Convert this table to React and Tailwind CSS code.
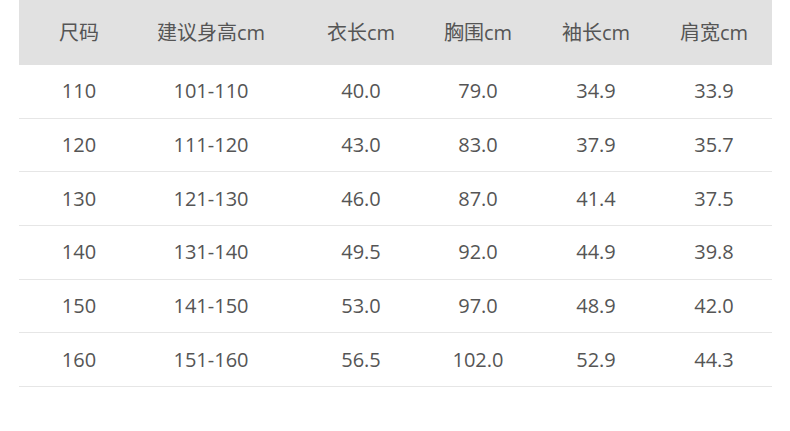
const headers = ['尺码', '建议身高cm', '衣长cm', '胸围cm', '袖长cm', '肩宽cm']

const rows = [
  ['110', '101-110', '40.0', '79.0', '34.9', '33.9'],
  ['120', '111-120', '43.0', '83.0', '37.9', '35.7'],
  ['130', '121-130', '46.0', '87.0', '41.4', '37.5'],
  ['140', '131-140', '49.5', '92.0', '44.9', '39.8'],
  ['150', '141-150', '53.0', '97.0', '48.9', '42.0'],
  ['160', '151-160', '56.5', '102.0', '52.9', '44.3'],
]

// column widths picked so each text centre lands where the picture has it
const cols = 'grid grid-cols-[120px_144px_156px_78px_158px_78px_1fr]'

export default function App() {
  return (
    <div
      className="w-[790px] h-[431px] bg-white pl-[19px] pr-[18px] text-[20px] text-[#555]"
      style={{ fontFamily: '"Open Sans", "Noto Sans CJK SC", sans-serif' }}
    >
      <div className={`${cols} h-[65px] items-center bg-[#e1e1e1] text-[#555]`}>
        {headers.map(h => (
          <div key={h} className="text-center whitespace-nowrap">{h}</div>
        ))}
      </div>
      {rows.map(row => (
        <div key={row[0]} className={`${cols} h-[53.7px] items-center border-b border-[#e6e6e6]`}>
          {row.map((cell, i) => (
            <div key={i} className="text-center">{cell}</div>
          ))}
        </div>
      ))}
    </div>
  )
}
